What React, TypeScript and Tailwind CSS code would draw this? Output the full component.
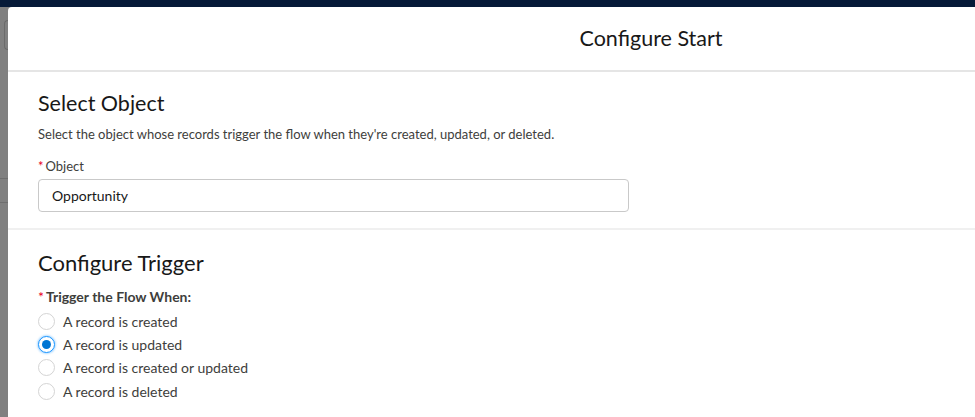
import React from "react"

const options = [
  "A record is created",
  "A record is updated",
  "A record is created or updated",
  "A record is deleted",
]

const Radio = ({ checked }: { checked: boolean }) => (
  <span
    className={
      "flex h-[17px] w-[17px] items-center justify-center rounded-full border bg-white " +
      (checked ? "border-[#1b96ff] shadow-[0_0_2px_1px_rgba(27,150,255,0.35)]" : "border-[#d4d4d4]")
    }
  >
    {checked && <span className="h-[9px] w-[9px] rounded-full bg-[#0176d3]" />}
  </span>
)

export default function App() {
  return (
    <div className="flex h-[417px] w-[975px] flex-col overflow-hidden bg-[#808080] font-['Lato',sans-serif] text-[#181818]">
      <div className="h-[7px] shrink-0 bg-[#061a38]" />
      <div className="flex flex-1">
        {/* background page strip */}
        <div className="flex w-[8px] shrink-0 flex-col">
          <div className="mt-[13px] ml-[4px] h-[30px] w-[4px] rounded-l-sm border border-r-0 border-[#6b6b6b]" />
          <div className="mt-[128px] h-px bg-[#6e6e6e]" />
          <div className="mt-[23px] h-px bg-[#6e6e6e]" />
        </div>

        {/* modal */}
        <div className="w-[1286px] shrink-0 rounded-tl-[4px] bg-white">
          <div className="flex h-[65px] items-center justify-center border-b-2 border-[#e5e5e5]">
            <h1 className="text-[21.5px] text-[#181818]">Configure Start</h1>
          </div>

          <section className="px-[30px] pt-[17px] pb-[16px] border-b-2 border-[#f0f0f0]">
            <h2 className="text-[21.5px] leading-[28px]">Select Object</h2>
            <p className="mt-[8px] text-[13px] text-[#3e3e3c]">
              Select the object whose records trigger the flow when they're created, updated, or deleted.
            </p>
            <label className="mt-[13px] block text-[13px] leading-[16px] text-[#3e3e3c]">
              <span className="mr-[2px] text-[#ea001e]">*</span>Object
            </label>
            <div className="mt-[5px] flex h-[33px] w-[591px] items-center rounded-[4px] border border-[#c9c9c9] px-[13px] text-[14px]">
              Opportunity
            </div>
          </section>

          <section className="px-[30px] pt-[19px]">
            <h2 className="text-[22px] leading-[28px]">Configure Trigger</h2>
            <div className="mt-[12px] text-[14px] font-bold leading-[16px] text-[#3e3e3c]">
              <span className="mr-[2px] font-normal text-[#ea001e]">*</span>Trigger the Flow When:
            </div>
            <div className="mt-[5px] flex flex-col">
              {options.map((o, i) => (
                <div key={o} className="flex h-[23.4px] items-center gap-[8px] text-[14px] text-[#3e3e3c]">
                  <Radio checked={i === 1} />
                  <span>{o}</span>
                </div>
              ))}
            </div>
          </section>
        </div>
      </div>
    </div>
  )
}
